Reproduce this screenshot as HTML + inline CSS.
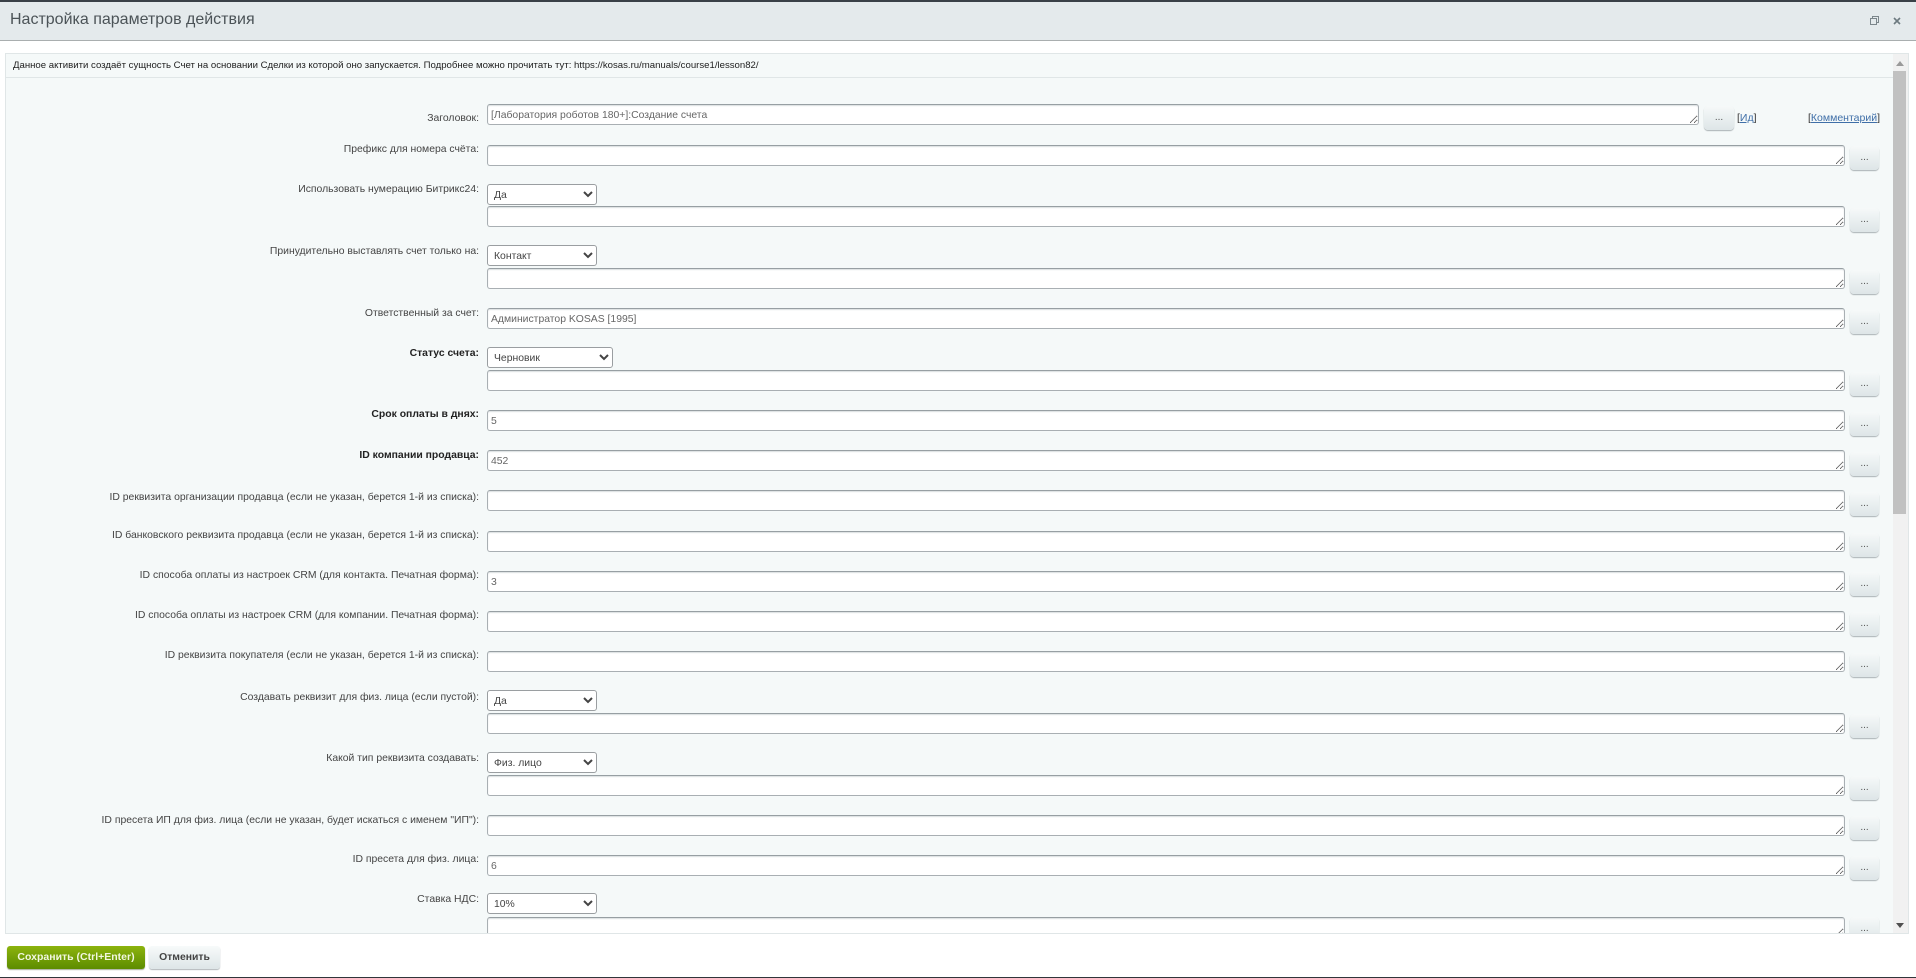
<!DOCTYPE html>
<html lang="ru"><head><meta charset="utf-8"><title>Настройка параметров действия</title>
<style>
html,body{margin:0;padding:0;width:1916px;height:978px;overflow:hidden;background:#fff;font-family:"Liberation Sans",Arial,sans-serif;}
#wrap{position:absolute;left:0;top:0;width:1916px;height:978px;overflow:hidden;filter:blur(.3px)}
#top{position:absolute;left:0;top:0;width:1916px;height:2px;background:#3a4147}
#head{position:absolute;left:0;top:2px;width:1916px;height:38px;background:#e4eaec;border-bottom:1px solid #a9aeaf}
#title{position:absolute;left:10px;top:8px;font-size:16px;line-height:20px;color:#4b5357;white-space:nowrap}
#panel{position:absolute;left:5px;top:53px;width:1902px;height:879px;background:#f5f9f9;border:1px solid #e0e6e7;overflow:hidden}
#desc{position:absolute;left:0;top:0;width:1887px;height:23px;border-bottom:1px solid #e0e6e7;font-size:9.6px;line-height:23px;color:#222;white-space:nowrap;padding-left:7px;box-sizing:content-box}
#sb{position:absolute;left:1887px;top:0;width:15px;height:879px;background:#f1f1f1}
#thumb{position:absolute;left:0;top:17px;width:13px;height:443px;background:#c1c1c1}
.l{position:absolute;right:1437px;margin-top:1px;font-size:10.4px;line-height:14px;color:#444;white-space:nowrap;text-align:right}
.b{font-weight:bold;color:#222}
textarea{position:absolute;left:487px;width:1358px;height:21px;box-sizing:border-box;margin:0;padding:4px 3px 2px 3px;font:10.4px/14px "Liberation Sans",Arial,sans-serif;color:#666;background:#fff;border:1px solid #a9afb3;border-top-color:#979fa3;border-radius:3px;box-shadow:inset 0 1px 1px rgba(150,160,165,.35);outline:none;overflow:hidden;resize:both}
select{position:absolute;left:487px;height:21px;box-sizing:border-box;margin:0;padding:1px 0 0 2px;font:10.4px "Liberation Sans",Arial,sans-serif;color:#444;background:#fff;border:1px solid #9a9ea1;border-radius:3px}
.d{position:absolute;left:1850px;width:29px;height:24px;box-sizing:border-box;border-radius:4px;background:linear-gradient(#f6f9f9,#dde5e7);box-shadow:0 1px 1px rgba(110,120,125,.55);font-size:10px;line-height:23px;text-align:center;color:#555}
.a{position:absolute;font-size:10.5px;line-height:14px;color:#333;white-space:nowrap}
.a span{color:#3f6fa8;text-decoration:underline}
#save{position:absolute;left:7px;top:946px;width:138px;height:23px;border-radius:3px;background:linear-gradient(#8cb30d,#5d8c00);box-shadow:0 1px 1px rgba(80,90,60,.5);color:#f2f7e0;font-size:10.5px;font-weight:bold;line-height:23px;text-align:center}
#cancel{position:absolute;left:149px;top:946px;width:71px;height:23px;border-radius:3px;background:linear-gradient(#f7fafa,#dde5e7);box-shadow:0 1px 1px rgba(110,120,125,.55);color:#444;font-size:10.4px;font-weight:bold;line-height:23px;text-align:center}
#bot{position:absolute;left:0;top:977px;width:1916px;height:1px;background:#30363b}
svg{position:absolute;overflow:visible}
</style></head><body><div id="wrap">
<div id="top"></div>
<div id="head"><div id="title">Настройка параметров действия</div></div>
<svg style="left:1870px;top:16px" width="10" height="10" viewBox="0 0 10 10"><path d="M2.5 2.5V.5H8.5V6.5H6.5M.5 2.5H6.5V8.5H.5Z" fill="none" stroke="#7b868b" stroke-width="1"/></svg>
<svg style="left:1893px;top:17px" width="8" height="8" viewBox="0 0 8 8"><path d="M1 1L7 7M7 1L1 7" fill="none" stroke="#6d7a80" stroke-width="1.6"/></svg>
<div id="panel">
<div id="desc">Данное активити создаёт сущность Счет на основании Сделки из которой оно запускается. Подробнее можно прочитать тут: https://kosas.ru/manuals/course1/lesson82/</div>
<div id="sb"><div id="thumb"></div>
<svg style="left:3px;top:7px" width="8" height="5" viewBox="0 0 8 5"><path d="M0 5L4 0L8 5Z" fill="#9a9a9a"/></svg>
<svg style="left:3px;top:869px" width="8" height="5" viewBox="0 0 8 5"><path d="M0 0L4 5L8 0Z" fill="#505050"/></svg>
</div>
</div>

<div class="l" style="top:111px">Заголовок:</div>
<textarea style="top:104px;width:1212px">[Лаборатория роботов 180+]:Создание счета</textarea>
<div class="d" style="left:1704px;top:106px;width:30px">...</div>
<div class="a" style="left:1737px;top:111px">[<span>Ид</span>]</div>
<div class="a" style="left:1808px;top:111px">[<span>Комментарий</span>]</div>

<div class="l" style="top:142px">Префикс для номера счёта:</div>
<textarea style="top:145px"></textarea>
<div class="d" style="top:146px">...</div>

<div class="l" style="top:182px">Использовать нумерацию Битрикс24:</div>
<select style="top:184px;width:110px"><option>Да</option></select>
<textarea style="top:206px"></textarea>
<div class="d" style="top:208px">...</div>

<div class="l" style="top:244px">Принудительно выставлять счет только на:</div>
<select style="top:245px;width:110px"><option>Контакт</option></select>
<textarea style="top:268px"></textarea>
<div class="d" style="top:270px">...</div>

<div class="l" style="top:306px">Ответственный за счет:</div>
<textarea style="top:308px">Администратор KOSAS [1995]</textarea>
<div class="d" style="top:310px">...</div>

<div class="l b" style="top:346px">Статус счета:</div>
<select style="top:347px;width:126px"><option>Черновик</option></select>
<textarea style="top:370px"></textarea>
<div class="d" style="top:372px">...</div>

<div class="l b" style="top:407px">Срок оплаты в днях:</div>
<textarea style="top:410px">5</textarea>
<div class="d" style="top:412px">...</div>

<div class="l b" style="top:448px">ID компании продавца:</div>
<textarea style="top:450px">452</textarea>
<div class="d" style="top:452px">...</div>

<div class="l" style="top:490px">ID реквизита организации продавца (если не указан, берется 1-й из списка):</div>
<textarea style="top:490px"></textarea>
<div class="d" style="top:492px">...</div>

<div class="l" style="top:528px">ID банковского реквизита продавца (если не указан, берется 1-й из списка):</div>
<textarea style="top:531px"></textarea>
<div class="d" style="top:533px">...</div>

<div class="l" style="top:568px">ID способа оплаты из настроек CRM (для контакта. Печатная форма):</div>
<textarea style="top:571px">3</textarea>
<div class="d" style="top:572px">...</div>

<div class="l" style="top:608px">ID способа оплаты из настроек CRM (для компании. Печатная форма):</div>
<textarea style="top:611px"></textarea>
<div class="d" style="top:612px">...</div>

<div class="l" style="top:648px">ID реквизита покупателя (если не указан, берется 1-й из списка):</div>
<textarea style="top:651px"></textarea>
<div class="d" style="top:653px">...</div>

<div class="l" style="top:690px">Создавать реквизит для физ. лица (если пустой):</div>
<select style="top:690px;width:110px"><option>Да</option></select>
<textarea style="top:713px"></textarea>
<div class="d" style="top:714px">...</div>

<div class="l" style="top:751px">Какой тип реквизита создавать:</div>
<select style="top:752px;width:110px"><option>Физ. лицо</option></select>
<textarea style="top:775px"></textarea>
<div class="d" style="top:776px">...</div>

<div class="l" style="top:813px">ID пресета ИП для физ. лица (если не указан, будет искаться с именем "ИП"):</div>
<textarea style="top:815px"></textarea>
<div class="d" style="top:816px">...</div>

<div class="l" style="top:852px">ID пресета для физ. лица:</div>
<textarea style="top:855px">6</textarea>
<div class="d" style="top:856px">...</div>

<div class="l" style="top:892px">Ставка НДС:</div>
<select style="top:893px;width:110px"><option>10%</option></select>
<textarea style="top:917px"></textarea>
<div class="d" style="top:917px">...</div>

<div style="position:absolute;left:0;top:934px;width:1916px;height:44px;background:#fff"></div>
<div style="position:absolute;left:5px;top:933px;width:1904px;height:1px;background:#e0e6e7"></div>
<div id="save">Сохранить (Ctrl+Enter)</div>
<div id="cancel">Отменить</div>
<div id="bot"></div>
</div></body></html>
